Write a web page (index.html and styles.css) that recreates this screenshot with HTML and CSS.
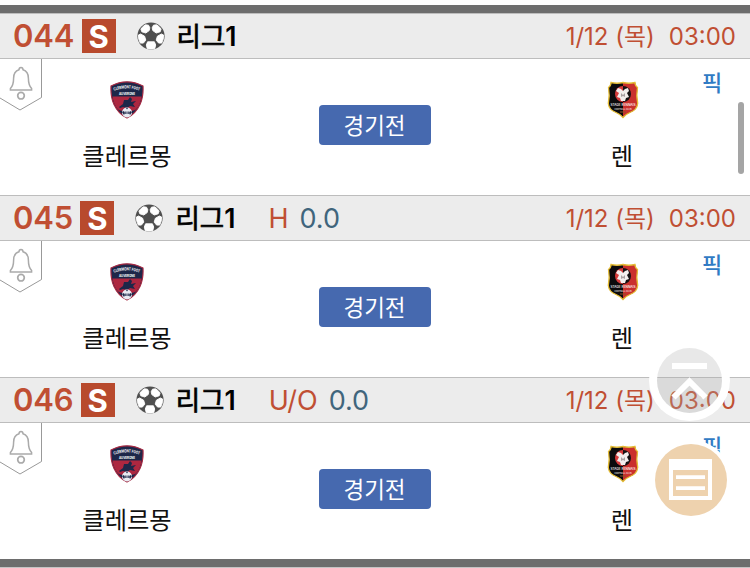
FILE: index.html
```
<!DOCTYPE html>
<html lang="ko">
  <head>
    <meta charset="UTF-8" />
    <meta name="viewport" content="width=device-width, initial-scale=1.0" />
    <title>리그1</title>
    <link rel="stylesheet" href="styles.css">
  </head>
  <body>
    <!-- Shared icons -->
    <svg class="sprite" aria-hidden="true">
      <symbol id="ball" viewBox="0 0 28 28">
        <circle cx="14" cy="14" r="13.600" fill="#4f4f4f" />
        <g fill="#fff" stroke="#fff" stroke-width=".9" stroke-linejoin="round">
          <path d="M8.500 2.800 11.500 3.200l1.300 2.600-.6 2.800L8.800 11 4.800 9.800 3.900 7Q6 4 8.500 2.800Z" />
          <path d="M19.500 2.800 16.500 3.200l-1.300 2.600.6 2.800L19.200 11l4-1.200.9-2.800Q22 4 19.500 2.800Z" />
          <path d="M1.400 13 3.600 12l4 2.200 1.200 3.900-2.400 3H3.300Q1.200 17.500 1.400 13Z" />
          <path d="M26.600 13 24.400 12l-4 2.200-1.200 3.900 2.400 3h3.100q2.100-3.600 1.900-8.100Z" />
          <path d="M10.600 19.800h6.800l1.300 3.200-.9 3.500q-3.800 1-7.600 0L9.300 23Z" />
        </g>
      </symbol>
      <symbol id="bell" viewBox="0 0 42 53">
        <path d="M41.500 0v38.500L20 51 0 39" fill="none" stroke="#999" />
        <path d="M21 8.500c1.600 0 2 1 2 2.300 4 1.200 5.400 4.500 5.400 8.400 0 5.500.7 7.600 3.200 10.300v1.400H10.400v-1.400c2.500-2.700 3.200-4.800 3.200-10.300 0-3.900 1.400-7.200 5.400-8.400 0-1.300.4-2.300 2-2.300Z" fill="none" stroke="#aaa" stroke-width="1.500" />
        <circle cx="21" cy="36.700" r="3.300" fill="none" stroke="#aaa" stroke-width="1.700" />
      </symbol>
      <symbol id="clermont" viewBox="0 0 34 38">
        <path d="M1 5Q9 .8 17 .8T33 5q.6 11-3 18.500Q25.500 33 17 37 8.500 33 4 23.500.4 16 1 5Z" fill="#1d2749" stroke="#a72a43" stroke-width="1.200" />
        <path d="M2.500 15.500h29q-1 8-5.500 13Q22 31 17 28.500 12 31 8 28.500 3.500 23 2.500 15.500Z" fill="#ad2740" />
        <path d="m9 26 4-3 1-4 4 0 2-3 2 2-1 3 5-1-3 3 2 3-5-1-3 2-4-1-3 1Z" fill="#1d2749" />
        <circle cx="17" cy="31.500" r="5" fill="#e8ebf2" />
        <path d="m12 31 2-1 1 2-1 2Zm10 0-2-1-1 2 1 2Zm-6-4h2l-1 1.500Z" fill="#1d2749" />
        <path d="M15.300 30.500h1.200v2.500h-1.200Zm2.200 0h1.200v2.500h-1.200Z" fill="#1d2749" />
        <path id="arc" d="M4 9.800Q17 5 30 9.800" fill="none" />
        <text font-size="4.200" font-weight="700" fill="#fff"><textPath href="#arc" textLength="26" lengthAdjust="spacingAndGlyphs">CLERMONT FOOT</textPath></text>
        <text x="9" y="13.800" font-size="4" font-weight="700" fill="#fff" textLength="16" lengthAdjust="spacingAndGlyphs">AUVERGNE</text>
      </symbol>
      <symbol id="rennes" viewBox="0 0 32 38">
        <path d="M4 1.500Q10 3 16 1.500 22 3 28 1.500q0 3.500 2.500 5-1.500 8 .2 16Q30 29 23 31.500q-4 1.500-7 5-3-3.500-7-5Q2 29 1.300 22.500q1.700-8 .2-16Q4 5 4 1.500Z" fill="#0c0b0d" />
        <path d="M16 1.500Q22 3 28 1.500q0 3.500 2.500 5-1.500 8 .2 16Q30 29 23 31.500q-4 1.500-7 5Z" fill="#ca302d" />
        <path d="M4 1.500Q10 3 16 1.500 22 3 28 1.500q0 3.500 2.500 5-1.500 8 .2 16Q30 29 23 31.500q-4 1.500-7 5-3-3.500-7-5Q2 29 1.300 22.500q1.700-8 .2-16Q4 5 4 1.500Z" fill="none" stroke="#e5bd35" stroke-width="1.300" />
        <path d="M16 5a8 8 0 0 0 0 16Z" fill="#d63b3b" />
        <path d="M16 5a8 8 0 0 1 0 16Z" fill="#161113" />
        <path d="m11 7 3 1 2 2 2-2 3-1 1 3-2 2 2 4-3 1-1 3h-4l-1-3-3-1 2-4-3-2Z" fill="#f3eeee" />
        <path d="m14 12 2 2 2-2v4l-2-1-2 1Z" fill="#aaa1a3" />
        <text x="3.500" y="25.300" font-size="3.500" font-weight="500" fill="#fff" textLength="25" lengthAdjust="spacingAndGlyphs">STADE RENNAIS</text>
        <text x="7.500" y="28.700" font-size="2.400" fill="#fff" textLength="17" lengthAdjust="spacingAndGlyphs">FOOTBALL CLUB</text>
        <path d="M13 31h6" stroke="#8b5527" />
      </symbol>
    </svg>

    <main class="match-list">
      <section class="match">
        <header class="match-header">
          <span class="number">044</span>
          <span class="badge">S</span>
          <svg class="ball"><use href="#ball" /></svg>
          <span class="league">리그<b>1</b></span>
          <span class="date">1/12 (목)</span>
          <span class="time">03:00</span>
        </header>
        <div class="match-body">
          <svg class="alarm"><use href="#bell" /></svg>
          <div class="team home">
            <svg class="crest"><use href="#clermont" /></svg>
            <span class="name">클레르몽</span>
          </div>
          <div class="status">경기전</div>
          <div class="team away">
            <svg class="crest"><use href="#rennes" /></svg>
            <span class="name">렌</span>
          </div>
          <span class="pick">픽</span>
        </div>
      </section>

      <section class="match">
        <header class="match-header">
          <span class="number">045</span>
          <span class="badge">S</span>
          <svg class="ball"><use href="#ball" /></svg>
          <span class="league">리그<b>1</b></span>
          <span class="type">H</span>
          <span class="line">0.0</span>
          <span class="date">1/12 (목)</span>
          <span class="time">03:00</span>
        </header>
        <div class="match-body">
          <svg class="alarm"><use href="#bell" /></svg>
          <div class="team home">
            <svg class="crest"><use href="#clermont" /></svg>
            <span class="name">클레르몽</span>
          </div>
          <div class="status">경기전</div>
          <div class="team away">
            <svg class="crest"><use href="#rennes" /></svg>
            <span class="name">렌</span>
          </div>
          <span class="pick">픽</span>
        </div>
      </section>

      <section class="match">
        <header class="match-header">
          <span class="number">046</span>
          <span class="badge">S</span>
          <svg class="ball"><use href="#ball" /></svg>
          <span class="league">리그<b>1</b></span>
          <span class="type">U/O</span>
          <span class="line">0.0</span>
          <span class="date">1/12 (목)</span>
          <span class="time">03:00</span>
        </header>
        <div class="match-body">
          <svg class="alarm"><use href="#bell" /></svg>
          <div class="team home">
            <svg class="crest"><use href="#clermont" /></svg>
            <span class="name">클레르몽</span>
          </div>
          <div class="status">경기전</div>
          <div class="team away">
            <svg class="crest"><use href="#rennes" /></svg>
            <span class="name">렌</span>
          </div>
          <span class="pick">픽</span>
        </div>
      </section>
    </main>

    <div class="scroll-thumb"></div>

    <!-- Floating buttons -->
    <button class="fab top-button" aria-label="맨 위로">
      <svg viewBox="0 0 65 65">
        <path d="M15 18h35M16.500 49.500l16-16 16 16" fill="none" stroke="#fff" stroke-width="6" />
      </svg>
    </button>
    <button class="fab slip-button" aria-label="목록">
      <svg viewBox="0 0 72 72">
        <path d="M14 15h43v41H14Z" fill="#fff" />
        <path d="M18 26h35v26H18Z" fill="#eed2ae" />
        <path d="M21 33.200h29M21 44.200h29" stroke="#fff" stroke-width="3.800" />
      </svg>
    </button>
  </body>
</html>
```

FILE: styles.css
```
* {
  box-sizing: border-box;
  margin: 0;
  padding: 0;
}

body {
  font-family: Inter, "Noto Sans CJK KR", sans-serif;
  height: 568px;
  padding-top: 5px;
  overflow: hidden;
  position: relative;
  background: #fff;
  color: #111;
}

.sprite {
  position: absolute;
  width: 0;
  height: 0;
}

.match-list {
  border-top: 8px solid #6d6d6d;
  border-bottom: 8px solid #6d6d6d;
  box-shadow: 0 1px 0 #c4c4c4;
}

.match {
  height: 182px;
}

.match-header {
  display: flex;
  align-items: center;
  height: 46px;
  padding: 0 14px 0 13px;
  background: #ececec;
  border-top: 1px solid #bdbdbd;
  border-bottom: 1px solid #bdbdbd;
  color: #c04f33;
  line-height: 46px;
  white-space: nowrap;
}

.number {
  font-size: 31px;
  font-weight: 600;
  letter-spacing: -0.2px;
}

.badge {
  width: 34px;
  height: 34px;
  margin-left: 7.4px;
  background: #b84a2d;
  color: #fff;
  font-size: 31px;
  font-weight: 700;
  line-height: 35px;
  text-align: center;
}

.ball {
  width: 28px;
  height: 28px;
  margin-left: 21px;
}

.league {
  width: 64px;
  margin-left: 12px;
  color: #000;
  font-size: 26.5px;
  font-weight: 400;
  -webkit-text-stroke: 0.7px #000;
}

.league b {
  font-weight: 600;
  -webkit-text-stroke: 0;
}

.type,
.line {
  font-size: 27px;
  line-height: 48px;
}

.type {
  margin-left: 29px;
}

.line {
  margin-left: 11px;
  color: #40657c;
}

.date,
.time {
  font-size: 24px;
  line-height: 48px;
}

.date {
  margin-left: auto;
}

.time {
  margin-left: 14px;
}

.type,
.line,
.date,
.time {
  padding-top: 2px;
}

.match-body {
  display: grid;
  grid-template-columns: 42px 170px 326px 170px 42px;
  height: 136px;
}

.alarm {
  width: 42px;
  height: 53px;
}

.team {
  display: flex;
  flex-direction: column;
  align-items: center;
  padding-top: 22px;
}

.crest {
  width: 34px;
  height: 38px;
}

.name {
  margin-top: 19px;
  font-size: 24.3px;
  line-height: 36px;
}

.away .name {
  margin-right: 2px;
}

.status {
  justify-self: center;
  width: 112px;
  height: 40px;
  margin-top: 46px;
  padding-right: 1px;
  border-radius: 4px;
  background: #4669af;
  color: #fff;
  font-size: 22.5px;
  line-height: 41px;
  text-align: center;
}

.pick {
  margin-top: 7px;
  margin-left: -6px;
  color: #317bc4;
  font-size: 22px;
  font-weight: 500;
  line-height: 34px;
}

.scroll-thumb {
  position: absolute;
  top: 102px;
  right: 6px;
  width: 6px;
  height: 72px;
  border-radius: 3px;
  background: #a5a5a5;
}

.fab {
  position: absolute;
  border: 0;
  border-radius: 50%;
}

.fab svg {
  display: block;
  width: 100%;
  height: 100%;
}

.top-button {
  top: 348px;
  left: 657px;
  width: 65px;
  height: 65px;
  background: rgba(173, 173, 173, 0.28);
  box-shadow: 0 0 0 8px #fff;
}

.slip-button {
  top: 444px;
  left: 655px;
  width: 72px;
  height: 72px;
  background: #eed2ae;
  box-shadow: 0 0 0 4px #fff;
}
```
